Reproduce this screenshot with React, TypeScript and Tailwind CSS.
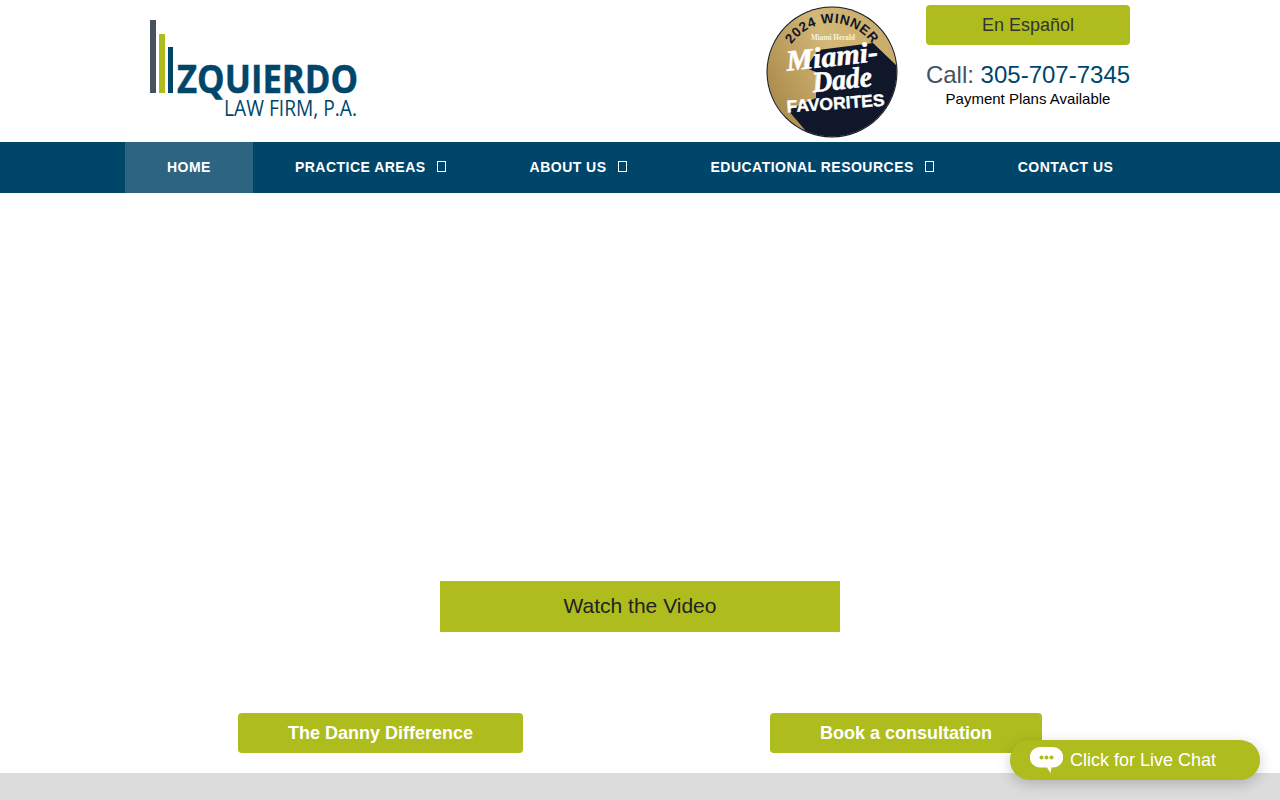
const font = 'font-["Liberation_Sans",Arial,sans-serif]'

function Logo() {
  return (
    <svg width="215" height="104" viewBox="0 0 215 104" className="block overflow-visible" aria-label="Izquierdo Law Firm, P.A.">
      <rect x="0" y="0" width="6" height="73" fill="#46535f" />
      <rect x="9" y="14" width="6" height="59" fill="#afbc1e" />
      <rect x="18" y="27" width="5" height="46" fill="#00466b" />
      <text
        x="27"
        y="73"
        textLength="181"
        lengthAdjust="spacingAndGlyphs"
        fontFamily="'Open Sans', sans-serif"
        fontWeight="700"
        fontSize="40"
        stroke="#00466b"
        strokeWidth="0.5"
        fill="#00466b"
      >
        ZQUIERDO
      </text>
      <text
        x="74"
        y="96"
        textLength="133"
        lengthAdjust="spacingAndGlyphs"
        fontFamily="'Open Sans', sans-serif"
        fontSize="22"
        fill="#00466b"
      >
        LAW FIRM, P.A.
      </text>
    </svg>
  )
}

function Badge() {
  return (
    <svg width="132" height="132" viewBox="0 0 132 132" className="block">
      <defs>
        <linearGradient id="gold" x1="0" y1="0.7" x2="1" y2="0.2">
          <stop offset="0" stopColor="#a98a4c" />
          <stop offset="0.55" stopColor="#d4b877" />
          <stop offset="1" stopColor="#c9aa68" />
        </linearGradient>
        <clipPath id="disc">
          <circle cx="66" cy="66" r="64.5" />
        </clipPath>
        <path id="rim" d="M 17 66 A 49 49 0 0 1 115 66" />
      </defs>
      <circle cx="66" cy="66" r="65.5" fill="#10172a" />
      <circle cx="66" cy="66" r="64.5" fill="url(#gold)" />
      <path
        d="M 40 62 L 52 44 L 107 37 L 131 60 L 140 140 L 39 140 L 39 124 L 22 104 L 50 92 L 50 66 Z"
        fill="#10172a"
        clipPath="url(#disc)"
      />
      <text fontFamily="'Liberation Sans', sans-serif" fontWeight="700" fontSize="13.5" letterSpacing="0.6" fill="#10172a">
        <textPath href="#rim" startOffset="50%" textAnchor="middle">
          2024 WINNER
        </textPath>
      </text>
      <text
        x="67"
        y="34"
        textAnchor="middle"
        textLength="44"
        lengthAdjust="spacingAndGlyphs"
        fontFamily="'Liberation Serif', serif"
        fontWeight="700"
        fontSize="8"
        fill="#f7f1e1"
      >
        Miami Herald
      </text>
      <g
        fill="#fff"
        stroke="#fff"
        strokeWidth="0.6"
        fontFamily="'Liberation Serif', serif"
        fontWeight="700"
        fontStyle="italic"
        textAnchor="middle"
      >
        <text x="67" y="60" fontSize="29" transform="rotate(-6 67 60)" textLength="92" lengthAdjust="spacingAndGlyphs">
          Miami-
        </text>
        <text x="77" y="83" fontSize="29" transform="rotate(-6 77 83)" textLength="60" lengthAdjust="spacingAndGlyphs">
          Dade
        </text>
      </g>
      <text
        x="70"
        y="103"
        textAnchor="middle"
        fontFamily="'Liberation Sans', sans-serif"
        fontWeight="700"
        fontSize="17"
        stroke="#fff"
        strokeWidth="0.4"
        fill="#fff"
        transform="rotate(-4 70 103)"
        textLength="98"
        lengthAdjust="spacingAndGlyphs"
      >
        FAVORITES
      </text>
    </svg>
  )
}

const navItems = [
  { label: 'HOME', active: true },
  { label: 'PRACTICE AREAS', caret: true },
  { label: 'ABOUT US', caret: true },
  { label: 'EDUCATIONAL RESOURCES', caret: true },
  { label: 'CONTACT US' },
]

function Nav() {
  return (
    <nav className="h-[51px] bg-[#00466b] shrink-0">
      <ul className="ml-[125px] flex h-full w-[1030px]">
        {navItems.map((item) => (
          <li
            key={item.label}
            className={`flex h-full items-center px-[42px] pb-[2px] text-[14px] leading-none font-bold tracking-[0.48px] whitespace-nowrap text-white ${item.active ? 'bg-[#2c6482]' : ''}`}
          >
            {item.label}
            {item.caret && (
              <span className="ml-[11px] box-border block h-[11px] w-[9px] border border-white" />
            )}
          </li>
        ))}
      </ul>
    </nav>
  )
}

export default function App() {
  return (
    <div className={`relative flex h-screen flex-col overflow-hidden bg-white ${font}`}>
      <header className="ml-[125px] flex h-[142px] w-[1005px] shrink-0">
        <div className="ml-[25px] pt-[20px]">
          <Logo />
        </div>
        <div className="mr-[28px] ml-auto pt-[6px]">
          <Badge />
        </div>
        <div className="flex w-[204px] flex-col items-center pt-[5px]">
          <a className="flex h-[40px] w-full items-center justify-center rounded-[4px] bg-[#afbc1e] text-[18px] text-[#333]">
            En Español
          </a>
          <p className="mt-[16px] text-[24px] leading-[28px] whitespace-nowrap text-[#46535f]">
            Call: <span className="text-[#00466b]">305-707-7345</span>
          </p>
          <p className="mt-[1px] text-[15px] leading-[18px] whitespace-nowrap text-black">Payment Plans Available</p>
        </div>
      </header>

      <Nav />

      <main className="flex flex-1 flex-col">
        <a className="mx-auto mt-[388px] flex h-[51px] w-[400px] items-center justify-center bg-[#afbc1e] pb-[1px] text-[21px] text-[#222]">
          Watch the Video
        </a>
        <div className="mt-[81px] ml-[238px] flex gap-[247px]">
          <a className="flex h-[40px] w-[285px] items-center justify-center rounded-[4px] bg-[#afbc1e] text-[18px] font-bold text-white">
            The Danny Difference
          </a>
          <a className="flex h-[40px] w-[272px] items-center justify-center rounded-[4px] bg-[#afbc1e] text-[18px] font-bold text-white">
            Book a consultation
          </a>
        </div>
      </main>

      <footer className="h-[27px] shrink-0 bg-[#dcdcdc]" />

      <button className="absolute top-[740px] left-[1010px] flex h-[40px] w-[250px] items-center rounded-[20px] bg-[#afbc1e] pl-[20px] text-[18px] text-white shadow-[0_4px_14px_rgba(0,0,0,0.2)]">
        <svg width="33" height="26" viewBox="0 0 33 26" className="mr-[7px] mb-[1px] block">
          <path d="M10 0h13a10 10 0 0 1 0 20.500h-1.500L20.500 26L17 20.500H10a10 10 0 0 1 0-20.500z" fill="#fff" />
          <circle cx="11.500" cy="10.500" r="2" fill="#afbc1e" />
          <circle cx="16.500" cy="10.500" r="2" fill="#afbc1e" />
          <circle cx="21.500" cy="10.500" r="2" fill="#afbc1e" />
        </svg>
        Click for Live Chat
      </button>
    </div>
  )
}
